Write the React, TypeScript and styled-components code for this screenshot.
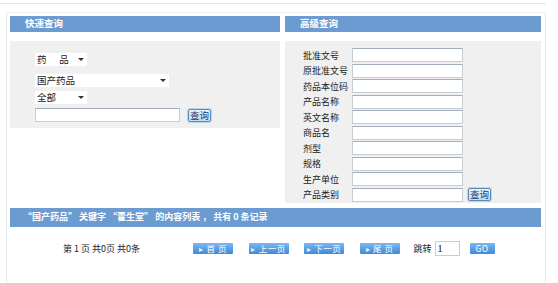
import React from "react";
import styled, { createGlobalStyle } from "styled-components";

const GlobalStyle = createGlobalStyle`
  html, body {
    margin: 0;
    padding: 0;
    background: #fff;
    font-family: "Noto Sans CJK SC", "Liberation Sans", sans-serif;
    font-size: 9px;
    color: #222;
  }
`;

const advancedFields = [
  "批准文号",
  "原批准文号",
  "药品本位码",
  "产品名称",
  "英文名称",
  "商品名",
  "剂型",
  "规格",
  "生产单位",
  "产品类别",
];

const pageButtons = ["首 页", "上一页", "下一页", "尾 页"];

const App = () => {
  return (
    <>
      <GlobalStyle />
      <Page>
        <TopLine />
        <Frame>
          <Columns>
            <Column>
              <Header>快速查询</Header>
              <QuickPanel>
                <FakeSelect width={52}>
                  <span>药&nbsp;&nbsp;&nbsp;&nbsp;&nbsp;&nbsp;品</span>
                  <Arrow />
                </FakeSelect>
                <FakeSelect width={134} $mt={8}>
                  <span>国产药品</span>
                  <Arrow />
                </FakeSelect>
                <FakeSelect width={52} $mt={4}>
                  <span>全部</span>
                  <Arrow />
                </FakeSelect>
                <InlineRow>
                  <TextInput width={145} />
                  <SmallButton>查询</SmallButton>
                </InlineRow>
              </QuickPanel>
            </Column>
            <Column>
              <Header>高级查询</Header>
              <AdvancedPanel>
                {advancedFields.map((label, i) => (
                  <FieldRow key={label}>
                    <FieldLabel>{label}</FieldLabel>
                    <TextInput width={111} />
                    {i === advancedFields.length - 1 && (
                      <SmallButton $ml={5}>查询</SmallButton>
                    )}
                  </FieldRow>
                ))}
              </AdvancedPanel>
            </Column>
          </Columns>
          <ResultBar>
            “国产药品” 关键字 “藿生堂” 的内容列表 ， 共有 0 条记录
          </ResultBar>
          <Pager>
            <PageInfo>第 1 页 共0页 共0条</PageInfo>
            <PagerButtons>
              {pageButtons.map((b) => (
                <NavButton key={b}>
                  <NavArrow>▸</NavArrow>
                  {b}
                </NavButton>
              ))}
            </PagerButtons>
            <JumpLabel>跳转</JumpLabel>
            <JumpInput defaultValue="1" />
            <NavButton $go>GO</NavButton>
          </Pager>
        </Frame>
      </Page>
    </>
  );
};

export default App;

const Page = styled.div`
  width: 558px;
  height: 283px;
  overflow: hidden;
`;

const TopLine = styled.div`
  margin-top: 3px;
  width: 546px;
  border-top: 1px solid #e3e6ea;
`;

const Frame = styled.div`
  margin: 8px 0 0 6px;
  width: 540px;
  height: 300px;
  border-left: 1px solid #e3e6ea;
  border-right: 1px solid #e3e6ea;
  border-top: 1px solid #eef0f2;
  padding: 3px 4px 0 3px;
  box-sizing: border-box;
`;

const Columns = styled.div`
  display: flex;
  gap: 5px;
  align-items: flex-start;
`;

const Column = styled.div`
  display: flex;
  flex-direction: column;
  &:first-child {
    width: 270px;
  }
  &:last-child {
    width: 256px;
  }
`;

const Header = styled.div`
  height: 16px;
  line-height: 15px;
  background: #6b9bd0;
  color: #fff;
  font-weight: bold;
  font-size: 9.5px;
  padding-left: 15px;
  margin-bottom: 9px;
`;

const QuickPanel = styled.div`
  background: #f0f0f0;
  height: 87px;
  padding: 12px 0 0 25px;
  box-sizing: border-box;
  display: flex;
  flex-direction: column;
  align-items: flex-start;
`;

const FakeSelect = styled.div<{ width: number; $mt?: number }>`
  width: ${(p) => p.width}px;
  height: 13px;
  margin-top: ${(p) => p.$mt ?? 0}px;
  background: #fff;
  display: flex;
  align-items: center;
  justify-content: space-between;
  padding: 0 3px 0 2px;
  box-sizing: border-box;
  font-size: 9.5px;
  line-height: 13px;
  color: #222;
`;

const Arrow = styled.span`
  width: 0;
  height: 0;
  border-left: 3px solid transparent;
  border-right: 3px solid transparent;
  border-top: 3px solid #333;
`;

const InlineRow = styled.div`
  display: flex;
  align-items: center;
  gap: 8px;
  margin-top: 4px;
`;

const TextInput = styled.div<{ width: number }>`
  width: ${(p) => p.width}px;
  height: 14px;
  background: #fff;
  border: 1px solid #c4ccd6;
  border-top-color: #a4aeba;
  box-sizing: border-box;
`;

const SmallButton = styled.div<{ $ml?: number }>`
  width: 23px;
  height: 13px;
  margin-left: ${(p) => p.$ml ?? 0}px;
  box-sizing: border-box;
  border: 1px solid #5a8bb8;
  border-radius: 2px;
  background: linear-gradient(#e8f2fb, #c6dcef);
  color: #1a3a66;
  font-size: 9.5px;
  line-height: 11px;
  text-align: center;
  box-shadow: 0 0 0 1px #bcd6ec;
`;

const AdvancedPanel = styled.div`
  background: #f0f0f0;
  height: 162px;
  padding: 7px 0 0 18px;
  box-sizing: border-box;
  display: flex;
  flex-direction: column;
  gap: 1.5px;
`;

const FieldRow = styled.div`
  display: flex;
  align-items: center;
  height: 14px;
`;

const FieldLabel = styled.span`
  width: 49px;
  font-size: 9px;
  color: #222;
  white-space: nowrap;
`;

const ResultBar = styled.div`
  margin-top: 5px;
  height: 19px;
  line-height: 18px;
  background: #6b9bd0;
  color: #fff;
  font-weight: bold;
  font-size: 9px;
  padding-left: 13px;
  white-space: pre;
`;

const Pager = styled.div`
  display: flex;
  align-items: center;
  height: 16px;
  margin-top: 13px;
  padding-left: 53px;
`;

const PageInfo = styled.span`
  font-size: 9px;
  width: 130px;
`;

const PagerButtons = styled.div`
  display: flex;
  gap: 15.5px;
  margin-right: 14px;
`;

const NavButton = styled.div<{ $go?: boolean }>`
  width: ${(p) => (p.$go ? 25 : 40)}px;
  height: 11px;
  margin-left: ${(p) => (p.$go ? 10 : 0)}px;
  border-radius: 1px;
  background: linear-gradient(#7ab8f0, #3f89d8);
  color: #fff;
  font-size: 8.5px;
  line-height: 11px;
  display: flex;
  align-items: center;
  justify-content: center;
  gap: 3px;
  letter-spacing: 0.5px;
`;

const NavArrow = styled.span`
  font-size: 8px;
  color: #e4f2ff;
`;

const JumpLabel = styled.span`
  font-size: 9px;
  margin-right: 3px;
`;

const JumpInput = styled.input`
  width: 25px;
  height: 15px;
  box-sizing: border-box;
  border: 1px solid #c4ccd6;
  padding: 0 0 0 2px;
  font-size: 10px;
  font-family: "Liberation Serif", serif;
  outline: none;
`;
